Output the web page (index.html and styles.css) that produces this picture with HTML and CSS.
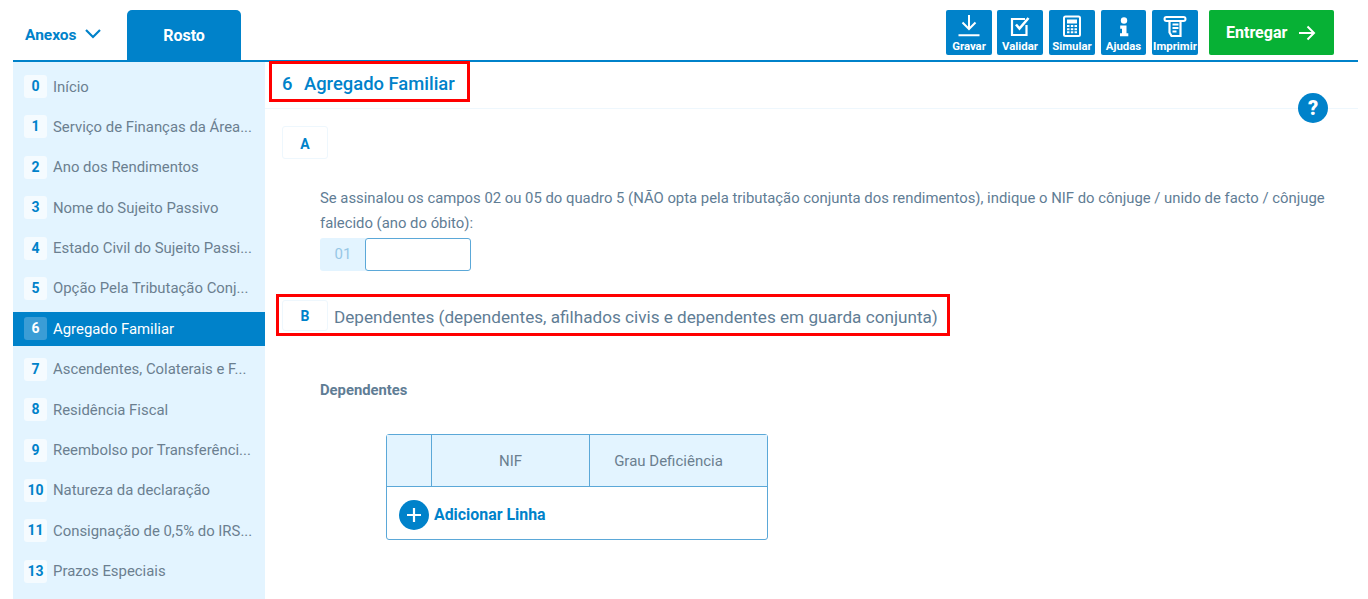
FILE: index.html
```html
<!DOCTYPE html>
<html lang="pt">
<head>
  <meta charset="utf-8">
  <title>Agregado Familiar</title>
  <link rel="stylesheet" href="styles.css">
</head>
<body>
  <header class="topbar">
    <a class="anexos">Anexos
      <svg width="18" height="11" viewBox="0 0 18 11"><path d="M2 2l7 7 7-7" fill="none" stroke="#0082ca" stroke-width="2.2"/></svg>
    </a>
    <a class="tab">Rosto</a>
    <div class="actions">
      <a class="tool">
        <svg width="24" height="24" viewBox="0 0 24 24" fill="none" stroke="#fff" stroke-width="2"><path d="M12 1v14M5.500 8.500l6.500 6.500 6.500-6.500M1.500 21.200h21"/></svg>
        Gravar
      </a>
      <a class="tool">
        <svg width="24" height="24" viewBox="0 0 24 24" fill="none" stroke="#fff" stroke-width="2.200"><path d="M18.500 11v10H4V5h13"/><path d="M8 10.500l3.500 4L20.500 4" stroke-width="2.600"/></svg>
        Validar
      </a>
      <a class="tool">
        <svg width="24" height="24" viewBox="0 0 24 24"><path d="M5.500 2.500h13a1.500 1.500 0 0 1 1.500 1.500v16.500a1.500 1.500 0 0 1-1.500 1.500h-13A1.500 1.500 0 0 1 4 20.500V4a1.500 1.500 0 0 1 1.500-1.500z" fill="none" stroke="#fff" stroke-width="2"/><path d="M7 5.500h10v4H7zM7 11h2.500v2H7zM10.800 11h2.500v2h-2.500zM14.500 11H17v2h-2.500zM7 14.200h2.500v2H7zM10.800 14.200h2.500v2h-2.500zM14.500 14.200H17v2h-2.500zM7 17.300h2.500v2H7zM10.800 17.300h2.500v2h-2.500zM14.500 17.300H17v2h-2.500z" fill="#fff"/></svg>
        Simular
      </a>
      <a class="tool tool-narrow">
        <svg width="24" height="24" viewBox="0 0 24 24" fill="#fff"><circle cx="12" cy="6.500" r="3.200"/><path d="M8.200 11.500h6.300v7.800h1.800v3H8v-3h2v-4.600H8.200z"/></svg>
        Ajudas
      </a>
      <a class="tool">
        <svg width="24" height="24" viewBox="0 0 24 24" fill="none" stroke="#fff" stroke-width="2"><rect x="1.500" y="3" width="21" height="4" rx="2"/><path d="M6.500 6v12.500L8.500 22h9V6" stroke-width="2.200"/><path d="M9.500 10.500h6M9.500 14h6M9.500 17.500h4"/></svg>
        Imprimir
      </a>
      <a class="deliver">Entregar
        <svg width="18" height="16" viewBox="0 0 18 16" fill="none" stroke="#fff" stroke-width="2"><path d="M1 8h15M9.500 1.500L16 8l-6.500 6.500"/></svg>
      </a>
    </div>
  </header>

  <div class="layout">
    <nav class="sidebar">
      <a class="nav-item"><span class="num">0</span><span class="label">Início</span></a>
      <a class="nav-item"><span class="num">1</span><span class="label">Serviço de Finanças da Área...</span></a>
      <a class="nav-item"><span class="num">2</span><span class="label">Ano dos Rendimentos</span></a>
      <a class="nav-item"><span class="num">3</span><span class="label">Nome do Sujeito Passivo</span></a>
      <a class="nav-item"><span class="num">4</span><span class="label">Estado Civil do Sujeito Passi...</span></a>
      <a class="nav-item"><span class="num">5</span><span class="label">Opção Pela Tributação Conj...</span></a>
      <a class="nav-item active"><span class="num">6</span><span class="label">Agregado Familiar</span></a>
      <a class="nav-item"><span class="num">7</span><span class="label">Ascendentes, Colaterais e F...</span></a>
      <a class="nav-item"><span class="num">8</span><span class="label">Residência Fiscal</span></a>
      <a class="nav-item"><span class="num">9</span><span class="label">Reembolso por Transferênci...</span></a>
      <a class="nav-item"><span class="num">10</span><span class="label">Natureza da declaração</span></a>
      <a class="nav-item"><span class="num">11</span><span class="label">Consignação de 0,5% do IRS...</span></a>
      <a class="nav-item"><span class="num">13</span><span class="label">Prazos Especiais</span></a>
    </nav>

    <main class="content">
      <div class="title-row">
        <h1 class="title mark"><span>6</span>Agregado Familiar</h1>
      </div>
      <a class="help">?</a>

      <div class="section-head"><span class="letter">A</span></div>
      <p class="intro">Se assinalou os campos 02 ou 05 do quadro 5 (NÃO opta pela tributação conjunta dos rendimentos), indique o NIF do cônjuge / unido de facto / cônjuge falecido (ano do óbito):</p>
      <div class="field">
        <span class="field-num">01</span>
        <input class="field-input" type="text">
      </div>

      <div class="section-b mark">
        <span class="letter">B</span>
        <h2>Dependentes (dependentes, afilhados civis e dependentes em guarda conjunta)</h2>
      </div>

      <h3 class="sub">Dependentes</h3>

      <table class="grid">
        <thead>
          <tr><th class="c1"></th><th class="c2">NIF</th><th class="c3">Grau Deficiência</th></tr>
        </thead>
        <tbody>
          <tr>
            <td colspan="3">
              <a class="add">
                <svg width="30" height="30" viewBox="0 0 30 30"><circle cx="15" cy="15" r="15" fill="#0082ca"/><path d="M15 8v14M8 15h14" stroke="#fff" stroke-width="2.200"/></svg>
                Adicionar Linha
              </a>
            </td>
          </tr>
        </tbody>
      </table>
    </main>
  </div>
</body>
</html>
```

FILE: styles.css
```css
* {
  box-sizing: border-box;
}

html, body {
  height: 100%;
  overflow: hidden;
}

body {
  margin: 0;
  padding: 0 10px 0 13px;
  background: #fff;
  font: 15px "Roboto", "Liberation Sans", sans-serif;
  color: #5f7d95;
}

/* top bar */
.topbar {
  display: flex;
  align-items: flex-end;
  height: 62px;
  border-bottom: 2px solid #0082ca;
}

.anexos {
  display: flex;
  align-items: center;
  gap: 7px;
  width: 114px;
  height: 50px;
  padding-left: 12px;
  font-size: 15.500px;
  font-weight: 700;
  color: #0082ca;
}

.anexos svg {
  margin-top: -3px;
}

.tab {
  display: flex;
  align-items: center;
  justify-content: center;
  width: 114px;
  height: 50px;
  background: #0082ca;
  border-radius: 5px 5px 0 0;
  font-size: 16px;
  font-weight: 700;
  color: #fff;
}

.actions {
  display: flex;
  align-items: flex-start;
  gap: 6px;
  margin-left: auto;
  margin-right: 24px;
  height: 50px;
}

.tool {
  display: flex;
  flex-direction: column;
  align-items: center;
  width: 46px;
  height: 45px;
  padding-top: 4px;
  background: #0082ca;
  border-radius: 2px;
  font-size: 11.400px;
  font-weight: 700;
  line-height: 14px;
  white-space: nowrap;
  color: #fff;
}

.tool svg {
  flex: none;
  margin-bottom: 1px;
}

.tool:first-child {
  margin-right: -1px;
}

.tool-narrow {
  width: 45px;
}

.deliver {
  display: flex;
  align-items: center;
  gap: 11px;
  width: 125px;
  height: 45px;
  margin-left: 5px;
  padding-left: 17px;
  background: #07b135;
  border-radius: 2px;
  font-size: 16px;
  font-weight: 700;
  color: #fff;
}

/* sidebar */
.layout {
  display: flex;
  height: calc(100% - 62px);
}

.sidebar {
  flex: none;
  display: flex;
  flex-direction: column;
  gap: 6.400px;
  width: 252px;
  padding-top: 7.500px;
  background: #e3f4ff;
}

.nav-item {
  display: flex;
  align-items: center;
  gap: 6px;
  height: 34px;
  padding-left: 11px;
  font-size: 14.900px;
  color: #6b7f90;
}

.num {
  flex: none;
  width: 23px;
  height: 23px;
  background: #f5fbff;
  border-radius: 3px;
  text-align: center;
  font-size: 14px;
  font-weight: 700;
  line-height: 23px;
  color: #0082ca;
}

.label {
  white-space: nowrap;
}

.nav-item.active {
  background: #0082ca;
  color: #fff;
}

.active .num {
  background: #3b9dd6;
  color: #fff;
}

/* content */
.content {
  position: relative;
  flex: 1;
  min-width: 0;
}

.mark {
  border: 3px solid #f00;
}

.title-row {
  height: 48px;
  padding-left: 4px;
  margin-top: -1px;
  border-bottom: 1px solid #eef7fd;
}

.title {
  display: inline-flex;
  align-items: center;
  width: 201px;
  height: 41px;
  margin: 0;
  padding: 4px 0 0 10px;
  background: #fff;
  font-size: 18.400px;
  font-weight: 500;
  color: #0082ca;
}

.title span {
  width: 22px;
}

.help {
  position: absolute;
  top: 31px;
  right: 30px;
  width: 30px;
  height: 30px;
  background: #0082ca;
  border-radius: 50%;
  text-align: center;
  font-size: 20px;
  font-weight: 900;
  line-height: 30px;
  color: #fff;
}

.letter {
  flex: none;
  width: 46px;
  height: 33px;
  border: 1px solid #eef7fd;
  border-radius: 3px;
  text-align: center;
  font-size: 14px;
  font-weight: 700;
  line-height: 35px;
  color: #0082ca;
}

.section-head {
  margin: 17px 0 0 17px;
}

.section-head .letter {
  display: block;
}

.intro {
  margin: 27px 30px 0 55px;
  font-size: 14.850px;
  line-height: 25px;
  color: #5f7d95;
}

.field {
  display: flex;
  height: 33px;
  margin: 2px 0 0 55px;
}

.field-num {
  width: 46px;
  background: #e3f4ff;
  border-radius: 3px 0 0 3px;
  text-align: center;
  line-height: 33px;
  color: #97c7e6;
}

.field-input {
  width: 106px;
  height: 33px;
  margin-left: -1px;
  border: 1px solid #5ba8d8;
  border-radius: 3px;
  background: #fff;
}

.section-b {
  display: flex;
  align-items: center;
  gap: 6px;
  width: 674px;
  height: 42px;
  margin: 23px 0 0 11px;
  padding-left: 3px;
}

.section-b .letter {
  height: 31px;
  line-height: 31px;
}

.section-b h2 {
  margin: 3px 0 0;
  font-size: 17.150px;
  font-weight: 400;
  white-space: nowrap;
  color: #5f7d95;
}

.sub {
  margin: 45px 0 0 55px;
  font-size: 14.800px;
  font-weight: 700;
  line-height: 18px;
  color: #5f7d95;
}

/* dependentes table */
.grid {
  margin: 35px 0 0 121px;
  width: 382px;
  table-layout: fixed;
  border: 1px solid #5ba8d8;
  border-radius: 3px;
  border-spacing: 0;
}

.grid th {
  height: 52px;
  padding: 0;
  background: #e3f4ff;
  border-bottom: 1px solid #5ba8d8;
  font-size: 15px;
  font-weight: 400;
  color: #6b7f90;
}

.grid th + th {
  border-left: 1px solid #5ba8d8;
}

.grid .c3 {
  padding-right: 20px;
}

.c1 {
  width: 44px;
}

.c2 {
  width: 158px;
}

.grid td {
  height: 52px;
  padding: 3px 0 0 12px;
}

.add {
  display: flex;
  align-items: center;
  gap: 5px;
  font-size: 15.900px;
  font-weight: 700;
  color: #0082ca;
}
```
